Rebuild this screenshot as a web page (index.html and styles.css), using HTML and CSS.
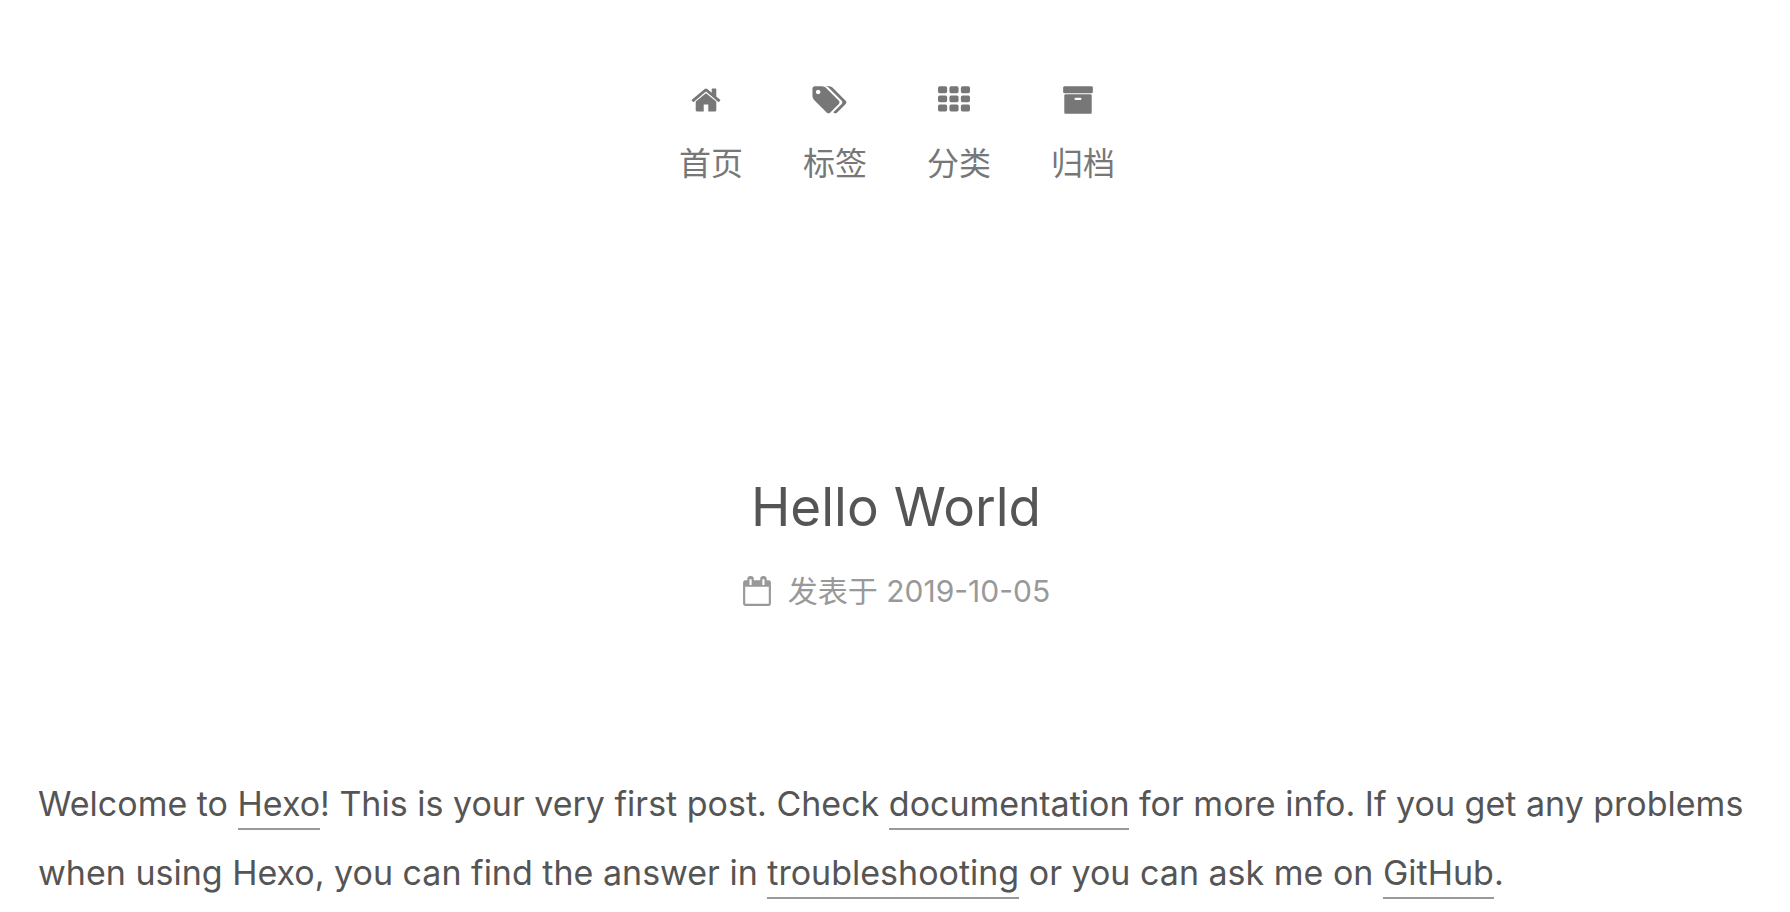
FILE: index.html
```
<!DOCTYPE html>
<html lang="zh-CN">
<head>
<meta charset="utf-8">
<title>Hello World</title>
<link rel="stylesheet" href="styles.css">
</head>
<body>
<header class="site-header">
  <nav class="menu">
    <a class="menu-item" href="#home">
      <svg class="menu-icon" viewBox="0 0 1792 1792" aria-hidden="true"><path d="M1472 992v480q0 26-19 45t-45 19h-384v-384h-256v384h-384q-26 0-45-19t-19-45v-480q0-1 .5-3t.5-3l575-474 575 474q1 2 1 6zm223-69l-62 74q-8 9-21 11h-3q-13 0-21-7l-692-577-692 577q-12 8-24 7-13-2-21-11l-62-74q-8-10-7-23.500t11-21.500l719-599q32-26 76-26t76 26l244 204v-195q0-14 9-23t23-9h192q14 0 23 9t9 23v408l219 182q10 8 11 21.500t-7 23.500z"/></svg>
      <span>首页</span>
    </a>
    <a class="menu-item" href="#tags">
      <svg class="menu-icon" viewBox="22 0 1792 1792" aria-hidden="true"><path d="M384 448q0-53-37.500-90.500t-90.500-37.500-90.500 37.500-37.500 90.500 37.500 90.500 90.500 37.500 90.500-37.500 37.500-90.500zm1067 576q0 53-37 90l-491 492q-39 37-91 37-53 0-90-37l-715-716q-38-37-64.500-101t-26.500-117v-416q0-52 38-90t90-38h416q53 0 117 26.500t102 64.500l715 714q37 39 37 91zm384 0q0 53-37 90l-491 492q-39 37-91 37-36 0-59-14t-53-45l470-470q37-37 37-90 0-52-37-91l-715-714q-38-38-102-64.500t-117-26.500h224q53 0 117 26.500t102 64.500l715 714q37 39 37 91z"/></svg>
      <span>标签</span>
    </a>
    <a class="menu-item" href="#categories">
      <svg class="menu-icon" viewBox="0 0 1792 1792" aria-hidden="true"><path d="M96 128h320a96 96 0 0 1 96 96v192a96 96 0 0 1-96 96h-320a96 96 0 0 1-96-96v-192a96 96 0 0 1 96-96zM736 128h320a96 96 0 0 1 96 96v192a96 96 0 0 1-96 96h-320a96 96 0 0 1-96-96v-192a96 96 0 0 1 96-96zM1376 128h320a96 96 0 0 1 96 96v192a96 96 0 0 1-96 96h-320a96 96 0 0 1-96-96v-192a96 96 0 0 1 96-96zM96 640h320a96 96 0 0 1 96 96v192a96 96 0 0 1-96 96h-320a96 96 0 0 1-96-96v-192a96 96 0 0 1 96-96zM736 640h320a96 96 0 0 1 96 96v192a96 96 0 0 1-96 96h-320a96 96 0 0 1-96-96v-192a96 96 0 0 1 96-96zM1376 640h320a96 96 0 0 1 96 96v192a96 96 0 0 1-96 96h-320a96 96 0 0 1-96-96v-192a96 96 0 0 1 96-96zM96 1152h320a96 96 0 0 1 96 96v192a96 96 0 0 1-96 96h-320a96 96 0 0 1-96-96v-192a96 96 0 0 1 96-96zM736 1152h320a96 96 0 0 1 96 96v192a96 96 0 0 1-96 96h-320a96 96 0 0 1-96-96v-192a96 96 0 0 1 96-96zM1376 1152h320a96 96 0 0 1 96 96v192a96 96 0 0 1-96 96h-320a96 96 0 0 1-96-96v-192a96 96 0 0 1 96-96z"/></svg>
      <span>分类</span>
    </a>
    <a class="menu-item" href="#archives">
      <svg class="menu-icon" viewBox="0 0 1792 1792" aria-hidden="true"><path d="M1088 832q0-26-19-45t-45-19h-256q-26 0-45 19t-19 45 19 45 45 19h256q26 0 45-19t19-45zm576-192v960q0 26-19 45t-45 19h-1408q-26 0-45-19t-19-45v-960q0-26 19-45t45-19h1408q26 0 45 19t19 45zm64-448v256q0 26-19 45t-45 19h-1536q-26 0-45-19t-19-45v-256q0-26 19-45t45-19h1536q26 0 45 19t19 45z"/></svg>
      <span>归档</span>
    </a>
  </nav>
</header>
<main class="post">
  <header class="post-header">
    <h1 class="post-title">Hello World</h1>
    <div class="post-meta">
      <svg class="meta-icon" viewBox="0 0 1792 1792" aria-hidden="true"><path d="M192 1664h1408v-1024h-1408v1024zm384-1152v-288q0-14-9-23t-23-9h-64q-14 0-23 9t-9 23v288q0 14 9 23t23 9h64q14 0 23-9t9-23zm768 0v-288q0-14-9-23t-23-9h-64q-14 0-23 9t-9 23v288q0 14 9 23t23 9h64q14 0 23-9t9-23zm384-128v1280q0 52-38 90t-90 38h-1408q-52 0-90-38t-38-90v-1280q0-52 38-90t90-38h128v-96q0-66 47-113t113-47h64q66 0 113 47t47 113v96h384v-96q0-66 47-113t113-47h64q66 0 113 47t47 113v96h128q52 0 90 38t38 90z"/></svg>
      <span>发表于 <time datetime="2019-10-05">2019-10-05</time></span>
    </div>
  </header>
  <p class="post-body">Welcome to <a href="#hexo">Hexo</a>! This is your very first post. Check <a href="#documentation">documentation</a> for more info. If you get any problems when using Hexo, you can find the answer in <a href="#troubleshooting">troubleshooting</a> or you can ask me on <a href="#github">GitHub</a>.</p>
</main>
</body>
</html>
```
FILE: styles.css
```
body {
  margin: 0;
  background: #fff;
  color: #555;
  font-family: Inter, "Noto Sans CJK SC", sans-serif;
}

.site-header {
  padding-top: 84px;
}

.menu {
  display: flex;
  justify-content: center;
  gap: 60px;
  padding-left: 4px;
}

.menu-item {
  display: flex;
  flex-direction: column;
  align-items: center;
  gap: 26px;
  color: #777;
  font-size: 32px;
  line-height: 44px;
  text-decoration: none;
}

.menu-icon {
  width: 32px;
  height: 32px;
  margin-right: 10px;
  fill: currentColor;
  overflow: visible;
}

.post {
  padding: 0 38px;
}

.post-header {
  display: flex;
  flex-direction: column;
  align-items: center;
  margin-top: 285px;
  padding-left: 2px;
}

.post-title {
  margin: 0;
  font-size: 53px;
  font-weight: 400;
  line-height: 72px;
}

.post-meta {
  display: flex;
  align-items: center;
  gap: 16px;
  margin-top: 26px;
  color: #999;
  font-size: 30px;
  line-height: 44px;
}

.meta-icon {
  width: 30px;
  height: 30px;
  fill: currentColor;
}

.post-body {
  margin: 156px 0 40px;
  font-size: 34px;
  line-height: 69px;
}

.post-body a {
  padding-bottom: 4px;
  border-bottom: 2px solid #999;
  color: #555;
  text-decoration: none;
}
```
